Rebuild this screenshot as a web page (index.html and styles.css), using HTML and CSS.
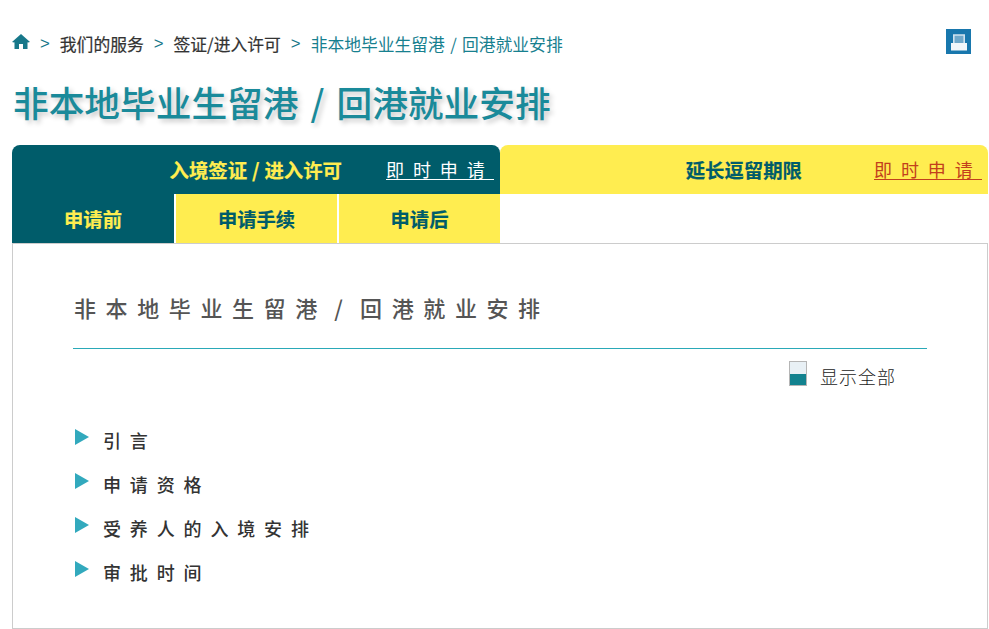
FILE: index.html
```html
<!DOCTYPE html>
<html lang="zh-CN">

<head>
    <meta charset="UTF-8">
    <meta name="viewport" content="width=device-width, initial-scale=1.0">
    <title>非本地毕业生留港 / 回港就业安排</title>
    <link rel="stylesheet" href="styles.css">
</head>

<body>
    <div class="top-bar">
        <div class="breadcrumb">
            <svg class="home-icon" viewBox="0 0 18 15" width="18" height="15">
                <path d="M9 0 L18 8 L16 8.6 L15.5 8.2 V15 H11 V10 H7 V15 H2.5 V8.2 L2 8.6 L0 8 Z" fill="#17788a"/>
            </svg>
            <span class="sep">&gt;</span>
            <a class="crumb">我们的服务</a>
            <span class="sep">&gt;</span>
            <a class="crumb">签证/进入许可</a>
            <span class="sep">&gt;</span>
            <span class="crumb-current">非本地毕业生留港 / 回港就业安排</span>
        </div>
        <div class="print-btn">
            <svg viewBox="0 0 25 25" width="25" height="25">
                <rect width="25" height="25" fill="#1877ad"/>
                <path d="M7.8 14 V6 H18.2 V14" fill="#6fa8ca" stroke="#cfe2ee" stroke-width="1.6"/>
                <rect x="5" y="14" width="16" height="7.5" fill="#f2f7fa"/>
            </svg>
        </div>
    </div>

    <h1 class="page-title">非本地毕业生留港 / 回港就业安排</h1>

    <div class="tabs">
        <div class="tab-main tab-dark">
            <span class="tab-name">入境签证 / 进入许可</span>
            <a class="apply-link">即 时 申 请</a>
        </div>
        <div class="tab-main tab-light">
            <span class="tab-name">延长逗留期限</span>
            <a class="apply-link">即 时 申 请</a>
        </div>
    </div>

    <div class="sub-tabs">
        <div class="sub-tab active">申请前</div>
        <div class="sub-tab">申请手续</div>
        <div class="sub-tab">申请后</div>
    </div>

    <div class="content">
        <h2 class="content-title">非本地毕业生留港 / 回港就业安排</h2>
        <div class="show-all">
            <span class="show-all-icon"></span>
            <span class="show-all-text">显示全部</span>
        </div>
        <ul class="topic-list">
            <li class="topic">引言</li>
            <li class="topic">申请资格</li>
            <li class="topic">受养人的入境安排</li>
            <li class="topic">审批时间</li>
        </ul>
    </div>
</body>

</html>
```

FILE: styles.css
```css
* {
    margin: 0;
    padding: 0;
    box-sizing: border-box;
}

body {
    font-family: "Noto Sans CJK SC", "Noto Sans", sans-serif;
    background-color: white;
    padding: 29px 1px 0 12px;
    height: 629px;
    overflow: hidden;
}

.top-bar {
    display: flex;
    justify-content: space-between;
    padding-right: 17px;
    height: 25px;
}

.breadcrumb {
    display: flex;
    align-items: center;
    height: 29px;
    font-size: 16.8px;
    color: #333;
}

.home-icon {
    margin-top: -4px;
}

.sep {
    margin: 0 10px;
    color: #17788a;
    font-family: "Liberation Sans", sans-serif;
    font-size: 16.8px;
}

.crumb {
    color: #333;
    -webkit-text-stroke: 0.2px #333;
}

.crumb-current {
    color: #17808f;
    word-spacing: 1.5px;
}

.page-title {
    margin-top: 22px;
    height: 69px;
    padding-left: 1px;
    font-size: 35.7px;
    line-height: 52px;
    font-weight: 500;
    word-spacing: 4px;
    color: #1a8a9a;
    text-shadow: 3px 3px 5px rgba(0, 0, 0, 0.22);
}

.tabs {
    display: flex;
    height: 49px;
}

.tab-main {
    width: 488px;
    display: flex;
    align-items: center;
    justify-content: flex-end;
    border-radius: 8px 8px 0 0;
    font-size: 19px;
}

.tab-dark {
    background: #005c6a;
    color: #ffed50;
}

.tab-light {
    background: #ffed50;
    color: #005c6a;
}

.tab-name {
    font-size: 19.4px;
    font-weight: 700;
    word-spacing: 0.5px;
    -webkit-text-stroke: 0.2px currentColor;
}

.tab-dark .tab-name {
    margin-right: 44px;
}

.tab-light .tab-name {
    margin-right: 72px;
}

.apply-link {
    width: 108px;
    margin-right: 6px;
    border-bottom: 1px solid currentColor;
    font-size: 18px;
    line-height: 19px;
    letter-spacing: 0.3px;
    white-space: pre;
    word-spacing: 4.3px;
}

.tab-dark .apply-link {
    color: white;
}

.tab-light .apply-link {
    color: #c2401c;
}

.sub-tabs {
    display: grid;
    grid-template-columns: 162px 161px 161px;
    gap: 2px;
    width: 488px;
    height: 49px;
}

.sub-tab {
    display: flex;
    align-items: center;
    justify-content: center;
    background: #ffed50;
    color: #005c6a;
    font-size: 19.3px;
    font-weight: 700;
    -webkit-text-stroke: 0.2px currentColor;
}

.sub-tab.active {
    background: #005c6a;
    color: #ffed50;
}

.content {
    height: 386px;
    border: 1px solid #ccc;
    padding: 0 60px;
}

.content-title {
    height: 105px;
    padding: 47px 0 0 1px;
    border-bottom: 1px solid #2aa9b8;
    font-size: 22px;
    line-height: 32px;
    font-weight: 500;
    letter-spacing: 9.6px;
    word-spacing: -7px;
    color: #555;
}

.show-all {
    display: flex;
    align-items: flex-start;
    padding: 12px 0 0 716px;
    height: 78px;
}

.show-all-icon {
    width: 18px;
    height: 25px;
    border: 1px solid #b5b5b5;
    background: linear-gradient(#e8f0f5 50%, #12828f 50%);
}

.show-all-text {
    margin: 2.5px 0 0 13px;
    font-size: 18px;
    line-height: 24px;
    font-weight: 300;
    letter-spacing: 1px;
    color: #222;
}

.topic-list {
    list-style: none;
}

.topic {
    position: relative;
    height: 44px;
    padding-left: 30px;
    font-size: 18px;
    line-height: 26px;
    letter-spacing: 8.85px;
    font-weight: 500;
    color: #333;
}

.topic::before {
    content: "";
    position: absolute;
    left: 2px;
    top: 2px;
    border-left: 14px solid #32a9bd;
    border-top: 8px solid transparent;
    border-bottom: 8px solid transparent;
}
```
